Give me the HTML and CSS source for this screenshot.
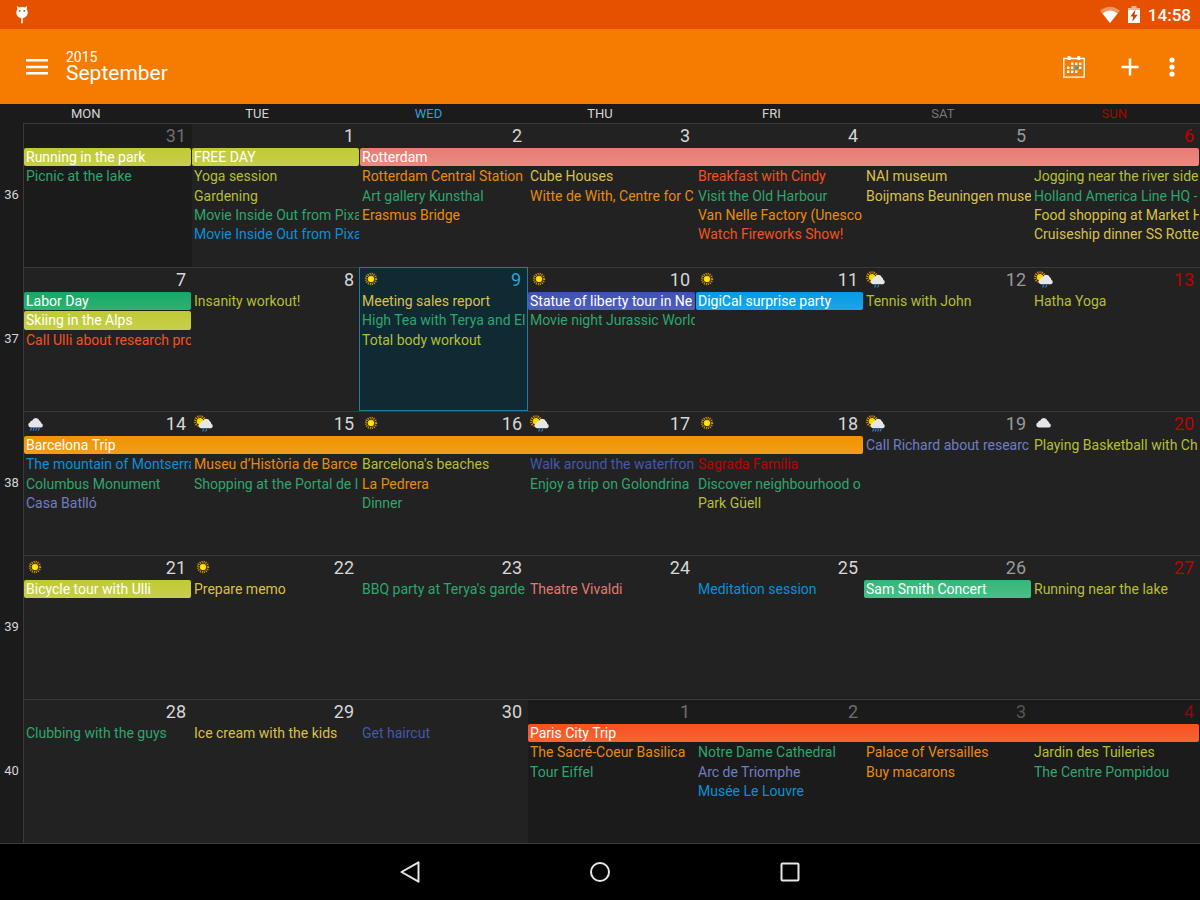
FILE: index.html
```html
<!DOCTYPE html>
<html lang="en">
<head>
<meta charset="utf-8">
<title>September 2015</title>
<link rel="stylesheet" href="styles.css">
</head>
<body>
<svg class="defs" aria-hidden="true">
  <symbol id="sun" viewBox="0 0 18 18">
    <circle cx="8" cy="8" r="5.100" fill="none" stroke="#d99400" stroke-width="2.200" stroke-dasharray="1 1.003"/>
    <circle cx="8" cy="8" r="3.100" fill="#ffe800" stroke="#ffb300" stroke-width=".5"/>
  </symbol>
  <symbol id="cloud" viewBox="0 0 18 18">
    <path fill="#e4e6ea" d="M3.600 12.500a2.600 2.600 0 0 1-.7-5A2.700 2.700 0 0 1 5.300 5.600 4.300 4.300 0 0 1 8.700 3 4.100 4.100 0 0 1 12.500 5.800 3 3 0 0 1 14.200 8.200a2.200 2.200 0 0 1-.2 4.300z"/>
  </symbol>
  <symbol id="rain" viewBox="0 0 18 18">
    <use href="#cloud"/>
    <path d="M4.500 13l-1.100 2.800M7.100 13 6 15.800M9.700 13l-1.100 2.800M12.300 13l-1.100 2.800" stroke="#2f7fd0" stroke-width="1.200"/>
  </symbol>
  <symbol id="part" viewBox="0 0 20 18">
    <circle cx="6" cy="6.200" r="4.900" fill="none" stroke="#e09a00" stroke-width="2.200" stroke-dasharray="1.100 1.100"/>
    <circle cx="6" cy="6.200" r="3.200" fill="#ffd800"/>
    <path fill="#e4e6ea" d="M7 13.200a2.600 2.600 0 0 1-.4-5.100A2.500 2.500 0 0 1 8.800 6 4.100 4.100 0 0 1 12.300 3.800 4 4 0 0 1 16 6.600a3 3 0 0 1 1.400 2.400 2.200 2.200 0 0 1-.4 4.200z"/>
  </symbol>
  <symbol id="drizzle" viewBox="0 0 20 18">
    <use href="#part"/>
    <path d="M9.700 13.900l-1.100 2.600M12.700 13.900l-1.100 2.600" stroke="#2f7fd0" stroke-width="1.300"/>
  </symbol>
  <symbol id="shower" viewBox="0 0 20 18">
    <use href="#part"/>
    <path d="M7.700 14l-1.100 2.600M10.200 14l-1.100 2.600M12.700 14l-1.100 2.600M15.200 14l-1.100 2.600" stroke="#2f7fd0" stroke-width="1.200"/>
  </symbol>
</svg>

<header class="status">
  <svg width="14" height="20" viewBox="0 0 14 20" fill="#fff" aria-hidden="true">
    <circle cx="7" cy="7.500" r="5.700"/>
    <path d="M1.700 1 4.500 2.500 2.500 4.500zM12.300 1 9.500 2.500l2 2zM6.200 12h1.600v6.300H6.200z"/>
    <circle cx="4.700" cy="5.800" r=".9" fill="#b23c00"/><circle cx="9.300" cy="5.800" r=".9" fill="#b23c00"/>
  </svg>
  <div class="tray">
    <svg width="20" height="18" viewBox="0 0 20 18" aria-hidden="true">
      <path fill="#f29562" d="M0 4.500Q10-3.200 20 4.500L10 17z"/><path fill="#fff" d="M2.400 7.400Q10 1.600 17.600 7.400L10 17z"/>
    </svg>
    <svg class="battery" width="12" height="18" viewBox="0 0 12 18" aria-hidden="true">
      <path fill="#f6b491" d="M3.500 0h5v2H12v3H0V2h3.500z"/><path fill="#fff" d="M0 4h12v13H0z"/><path fill="#c44400" d="M7.500 3.500 2.300 10.600h2.900l-.9 5.200L9.700 8.800H6.500z"/>
    </svg>
    <span>14:58</span>
  </div>
</header>

<div class="appbar">
  <button class="icon" aria-label="Menu"><svg width="22" height="18" viewBox="0 0 22 18" stroke="#fff" stroke-width="2.600"><path d="M0 2.300h22M0 9h22M0 15.300h22"/></svg></button>
  <h1><span class="year">2015</span><span class="month">September</span></h1>
  <div class="actions">
    <button class="icon" aria-label="Today"><svg width="22" height="22" viewBox="0 0 22 22" fill="#fff">
      <path d="M.8 2.500h20.400v18.700H.8z" fill="none" stroke="#fff" stroke-width="1.300"/><path d="M4.700 0h3v4h-3zM14.300 0h3v4h-3z"/>
      <path d="M8 6.500h2.400v2.400H8zM12 6.500h2.400v2.400H12zM16 6.500h2.400v2.400H16zM4 10.500h2.400v2.400H4zM8 10.500h2.400v2.400H8zM16 10.500h2.400v2.400H16zM4 14.500h2.400v2.400H4zM8 14.500h2.400v2.400H8zM12 14.500h2.400v2.400H12z"/><path fill="#2d9fd0" d="M11.700 10.300h3v3h-3z"/>
    </svg></button>
    <button class="icon" aria-label="Add event"><svg width="18" height="18" viewBox="0 0 18 18" stroke="#fff" stroke-width="2.500"><path d="M9 .500v17M.500 9h17"/></svg></button>
    <button class="icon more" aria-label="More options"><svg width="6" height="20" viewBox="0 0 6 20" fill="#fff"><circle cx="3" cy="3" r="2.600"/><circle cx="3" cy="10" r="2.600"/><circle cx="3" cy="17" r="2.600"/></svg></button>
  </div>
</div>

<main class="calendar">
  <div class="weekdays"><span>MON</span><span>TUE</span><span class="now">WED</span><span>THU</span><span>FRI</span><span class="sat">SAT</span><span class="sun">SUN</span></div>

  <section class="week"><div class="number">36</div><div class="grid">
    <div class="day c1 out"><time>31</time></div><div class="day c2"><time>1</time></div><div class="day c3"><time>2</time></div><div class="day c4"><time>3</time></div><div class="day c5"><time>4</time></div><div class="day c6 sat"><time>5</time></div><div class="day c7 sun"><time>6</time></div>
    <a href="#" class="bar c1 r1 lime">Running in the park</a>
    <a href="#" class="bar c2 r1 lime">FREE DAY</a>
    <a href="#" class="bar c3 s5 r1 salmon">Rotterdam</a>
    <a href="#" class="event c1 r2 green">Picnic at the lake</a>
    <a href="#" class="event c2 r2 lime">Yoga session</a>
    <a href="#" class="event c2 r3 lime">Gardening</a>
    <a href="#" class="event c2 r4 green">Movie Inside Out from Pixa</a>
    <a href="#" class="event c2 r5 blue">Movie Inside Out from Pixa</a>
    <a href="#" class="event c3 r2 orange">Rotterdam Central Station</a>
    <a href="#" class="event c3 r3 green">Art gallery Kunsthal</a>
    <a href="#" class="event c3 r4 orange">Erasmus Bridge</a>
    <a href="#" class="event c4 r2 yellow">Cube Houses</a>
    <a href="#" class="event c4 r3 orange">Witte de With, Centre for C</a>
    <a href="#" class="event c5 r2 tomato">Breakfast with Cindy</a>
    <a href="#" class="event c5 r3 green">Visit the Old Harbour</a>
    <a href="#" class="event c5 r4 orange">Van Nelle Factory (Unesco</a>
    <a href="#" class="event c5 r5 tomato">Watch Fireworks Show!</a>
    <a href="#" class="event c6 r2 yellow">NAI museum</a>
    <a href="#" class="event c6 r3 yellow">Boijmans Beuningen muse</a>
    <a href="#" class="event c7 r2 lime">Jogging near the river side</a>
    <a href="#" class="event c7 r3 green">Holland America Line HQ -</a>
    <a href="#" class="event c7 r4 yellow">Food shopping at Market H</a>
    <a href="#" class="event c7 r5 yellow">Cruiseship dinner SS Rotte</a>
  </div></section>

  <section class="week"><div class="number">37</div><div class="grid">
    <div class="day c1"><time>7</time></div><div class="day c2"><time>8</time></div><div class="day c3 today"><svg><use href="#sun"/></svg><time>9</time></div><div class="day c4"><svg><use href="#sun"/></svg><time>10</time></div><div class="day c5"><svg><use href="#sun"/></svg><time>11</time></div><div class="day c6 sat"><svg class="wide"><use href="#drizzle"/></svg><time>12</time></div><div class="day c7 sun"><svg class="wide"><use href="#drizzle"/></svg><time>13</time></div>
    <a href="#" class="bar c1 r1 emerald">Labor Day</a>
    <a href="#" class="bar c1 r2 lime">Skiing in the Alps</a>
    <a href="#" class="event c1 r3 tomato">Call Ulli about research pro</a>
    <a href="#" class="event c2 r1 lime">Insanity workout!</a>
    <a href="#" class="event c3 r1 yellow">Meeting sales report</a>
    <a href="#" class="event c3 r2 green">High Tea with Terya and El</a>
    <a href="#" class="event c3 r3 lime">Total body workout</a>
    <a href="#" class="bar c4 r1 indigo">Statue of liberty tour in Ne</a>
    <a href="#" class="event c4 r2 green">Movie night Jurassic World</a>
    <a href="#" class="bar c5 r1 blue">DigiCal surprise party</a>
    <a href="#" class="event c6 r1 lime">Tennis with John</a>
    <a href="#" class="event c7 r1 lime">Hatha Yoga</a>
  </div></section>

  <section class="week"><div class="number">38</div><div class="grid">
    <div class="day c1"><svg><use href="#rain"/></svg><time>14</time></div><div class="day c2"><svg class="wide"><use href="#drizzle"/></svg><time>15</time></div><div class="day c3"><svg><use href="#sun"/></svg><time>16</time></div><div class="day c4"><svg class="wide"><use href="#drizzle"/></svg><time>17</time></div><div class="day c5"><svg><use href="#sun"/></svg><time>18</time></div><div class="day c6 sat"><svg class="wide"><use href="#shower"/></svg><time>19</time></div><div class="day c7 sun"><svg><use href="#cloud"/></svg><time>20</time></div>
    <a href="#" class="bar c1 s5 r1 orange">Barcelona Trip</a>
    <a href="#" class="event c1 r2 blue">The mountain of Montserra</a>
    <a href="#" class="event c1 r3 green">Columbus Monument</a>
    <a href="#" class="event c1 r4 lavender">Casa Batlló</a>
    <a href="#" class="event c2 r2 orange">Museu d’Història de Barce</a>
    <a href="#" class="event c2 r3 green">Shopping at the Portal de l</a>
    <a href="#" class="event c3 r2 lime">Barcelona's beaches</a>
    <a href="#" class="event c3 r3 orange">La Pedrera</a>
    <a href="#" class="event c3 r4 green">Dinner</a>
    <a href="#" class="event c4 r2 indigo">Walk around the waterfron</a>
    <a href="#" class="event c4 r3 green">Enjoy a trip on Golondrina</a>
    <a href="#" class="event c5 r2 red">Sagrada Família</a>
    <a href="#" class="event c5 r3 green">Discover neighbourhood o</a>
    <a href="#" class="event c5 r4 lime">Park Güell</a>
    <a href="#" class="event c6 r1 lavender">Call Richard about researc</a>
    <a href="#" class="event c7 r1 lime">Playing Basketball with Ch</a>
  </div></section>

  <section class="week"><div class="number">39</div><div class="grid">
    <div class="day c1"><svg><use href="#sun"/></svg><time>21</time></div><div class="day c2"><svg><use href="#sun"/></svg><time>22</time></div><div class="day c3"><time>23</time></div><div class="day c4"><time>24</time></div><div class="day c5"><time>25</time></div><div class="day c6 sat"><time>26</time></div><div class="day c7 sun"><time>27</time></div>
    <a href="#" class="bar c1 r1 lime">Bicycle tour with Ulli</a>
    <a href="#" class="event c2 r1 yellow">Prepare memo</a>
    <a href="#" class="event c3 r1 green">BBQ party at Terya's garde</a>
    <a href="#" class="event c4 r1 salmon">Theatre Vivaldi</a>
    <a href="#" class="event c5 r1 blue">Meditation session</a>
    <a href="#" class="bar c6 r1 green">Sam Smith Concert</a>
    <a href="#" class="event c7 r1 lime">Running near the lake</a>
  </div></section>

  <section class="week"><div class="number">40</div><div class="grid">
    <div class="day c1"><time>28</time></div><div class="day c2"><time>29</time></div><div class="day c3"><time>30</time></div><div class="day c4 out"><time>1</time></div><div class="day c5 out"><time>2</time></div><div class="day c6 out sat"><time>3</time></div><div class="day c7 sun out"><time>4</time></div>
    <a href="#" class="event c1 r1 green">Clubbing with the guys</a>
    <a href="#" class="event c2 r1 yellow">Ice cream with the kids</a>
    <a href="#" class="event c3 r1 indigo">Get haircut</a>
    <a href="#" class="bar c4 s4 r1 tomato">Paris City Trip</a>
    <a href="#" class="event c4 r2 orange">The Sacré-Coeur Basilica</a>
    <a href="#" class="event c4 r3 green">Tour Eiffel</a>
    <a href="#" class="event c5 r2 green">Notre Dame Cathedral</a>
    <a href="#" class="event c5 r3 lavender">Arc de Triomphe</a>
    <a href="#" class="event c5 r4 blue">Musée Le Louvre</a>
    <a href="#" class="event c6 r2 orange">Palace of Versailles</a>
    <a href="#" class="event c6 r3 orange">Buy macarons</a>
    <a href="#" class="event c7 r2 lime">Jardin des Tuileries</a>
    <a href="#" class="event c7 r3 green">The Centre Pompidou</a>
  </div></section>
</main>

<nav class="navbar" aria-label="System">
  <button class="icon" aria-label="Back"><svg width="22" height="22" viewBox="0 0 22 22" fill="none" stroke="#e6e6e6" stroke-width="2" stroke-linejoin="round"><path d="M2.500 11 19.500 1.300v19.400z"/></svg></button>
  <button class="icon" aria-label="Home"><svg width="22" height="22" viewBox="0 0 22 22" fill="none" stroke="#e6e6e6" stroke-width="2"><circle cx="11" cy="11" r="9"/></svg></button>
  <button class="icon" aria-label="Recent apps"><svg width="22" height="22" viewBox="0 0 22 22" fill="none" stroke="#e6e6e6" stroke-width="2"><rect x="2.500" y="2.500" width="17" height="17" rx="1"/></svg></button>
</nav>
</body>
</html>
```
FILE: styles.css
```css
* { box-sizing: border-box; }

body {
  margin: 0;
  min-height: 100vh;
  display: flex;
  flex-direction: column;
  background: #000;
  color: #d6d6d6;
  font: 14px/18px Roboto, sans-serif;
}

.defs { position: absolute; width: 0; height: 0; }
svg { display: block; }

.icon {
  padding: 0;
  border: 0;
  background: none;
  cursor: pointer;
}

/* Status bar */
.status {
  display: flex;
  justify-content: space-between;
  align-items: center;
  height: 29px;
  padding: 0 9px 0 15px;
  background: #e65100;
}
.tray {
  display: flex;
  align-items: center;
  color: #fff;
  font-size: 17px;
  font-weight: 500;
}
.battery { margin: 0 8px; }

/* App bar */
.appbar {
  display: flex;
  align-items: center;
  height: 75px;
  padding: 0 25px 0 26px;
  background: #f57c00;
}
h1 {
  margin: 0 auto 2px 18px;
  color: #fff;
  font-weight: 400;
}
h1 span { display: block; }
.year { font-size: 14px; line-height: 14px; }
.month { font-size: 21px; line-height: 18px; }
.actions { display: flex; align-items: center; gap: 36px; }
.more { margin-left: -6px; }

/* Month grid */
.calendar {
  flex: 1;
  display: flex;
  flex-direction: column;
  background: #1b1b1b;
  border-bottom: 1px solid #3c3c3c;
}
.weekdays {
  display: grid;
  grid-template-columns: repeat(7, 1fr);
  height: 19px;
  font-size: 13px;
  line-height: 20px;
  text-align: center;
}
.weekdays .now { color: #2ba3d4; }
.weekdays .sat { color: #777; }
.weekdays .sun { color: #b00000; }

.week { flex: 1; display: flex; }
.number {
  width: 23px;
  display: flex;
  align-items: center;
  justify-content: center;
  font-size: 13px;
}
.grid {
  flex: 1;
  min-width: 0;
  display: grid;
  grid-template-columns: repeat(7, minmax(0, 1fr));
  grid-template-rows: 24px repeat(6, minmax(19px, 1fr));
  padding-bottom: 3px;
  border-top: 1px solid #3a3a3a;
  border-left: 1px solid #3a3a3a;
  background: #222;
}

.c1 { grid-column: 1; }
.c2 { grid-column: 2; }
.c3 { grid-column: 3; }
.c4 { grid-column: 4; }
.c5 { grid-column: 5; }
.c6 { grid-column: 6; }
.c7 { grid-column: 7; }
.s4 { grid-column-end: span 4; }
.s5 { grid-column-end: span 5; }
.r1 { grid-row: 2; }
.r2 { grid-row: 3; }
.r3 { grid-row: 4; }
.r4 { grid-row: 5; }
.r5 { grid-row: 6; }

.day {
  grid-row: 1 / -1;
  display: flex;
  align-items: flex-start;
  margin-bottom: -3px;
  padding: 1px 6px 0 2px;
}
.day svg { width: 18px; height: 18px; margin: 2px 0 0 1px; }
.day svg.wide { width: 20px; margin-left: 0; }
time { margin-left: auto; font-size: 18px; line-height: 22px; }
.day.sat { color: #999; }
.day.out { background: #1b1b1b; color: #6e6e6e; }
.day.out.sat { color: #555; }
.day.sun { color: #c00000; }
.day.sun.out { color: #7a1010; }
.day.today {
  margin-left: -1px;
  margin-top: -1px;
  background: #0f2a33;
  border: 1px solid #1d7f9c;
  color: #2ba3d4;
}

.event, .bar {
  margin-right: 1px;
  padding-left: 2px;
  display: block;
  overflow: hidden;
  white-space: nowrap;
  text-decoration: none;
}
.event { line-height: 19px; }
.bar {
  margin-bottom: 1px;
  border-radius: 2px;
  color: #fff;
  line-height: 18px;
}

.event.lime { color: #b5bf34; }
.event.green { color: #2fa56e; }
.event.blue { color: #0a90d8; }
.event.orange { color: #e88b0a; }
.event.yellow { color: #d9c04a; }
.event.tomato { color: #f4511e; }
.event.salmon { color: #e07a72; }
.event.indigo { color: #4558ab; }
.event.lavender { color: #727cc2; }
.event.red { color: #c00000; }

.bar.lime { background: linear-gradient(#c0ca33, #c6cf4a); }
.bar.salmon { background: linear-gradient(#e67c73, #ea8a82); }
.bar.emerald { background: linear-gradient(#16a765, #30b178); }
.bar.green { background: linear-gradient(#33b679, #4abf88); }
.bar.indigo { background: linear-gradient(#3f51b5, #5061b4); }
.bar.blue { background: linear-gradient(#039be5, #1ea5e8); }
.bar.orange { background: linear-gradient(#f09300, #f29d1a); }
.bar.tomato { background: linear-gradient(#f9501e, #f66436); }

/* System navigation */
.navbar {
  display: flex;
  align-items: center;
  justify-content: center;
  gap: 168px;
  height: 56px;
  background: #000;
}
```
